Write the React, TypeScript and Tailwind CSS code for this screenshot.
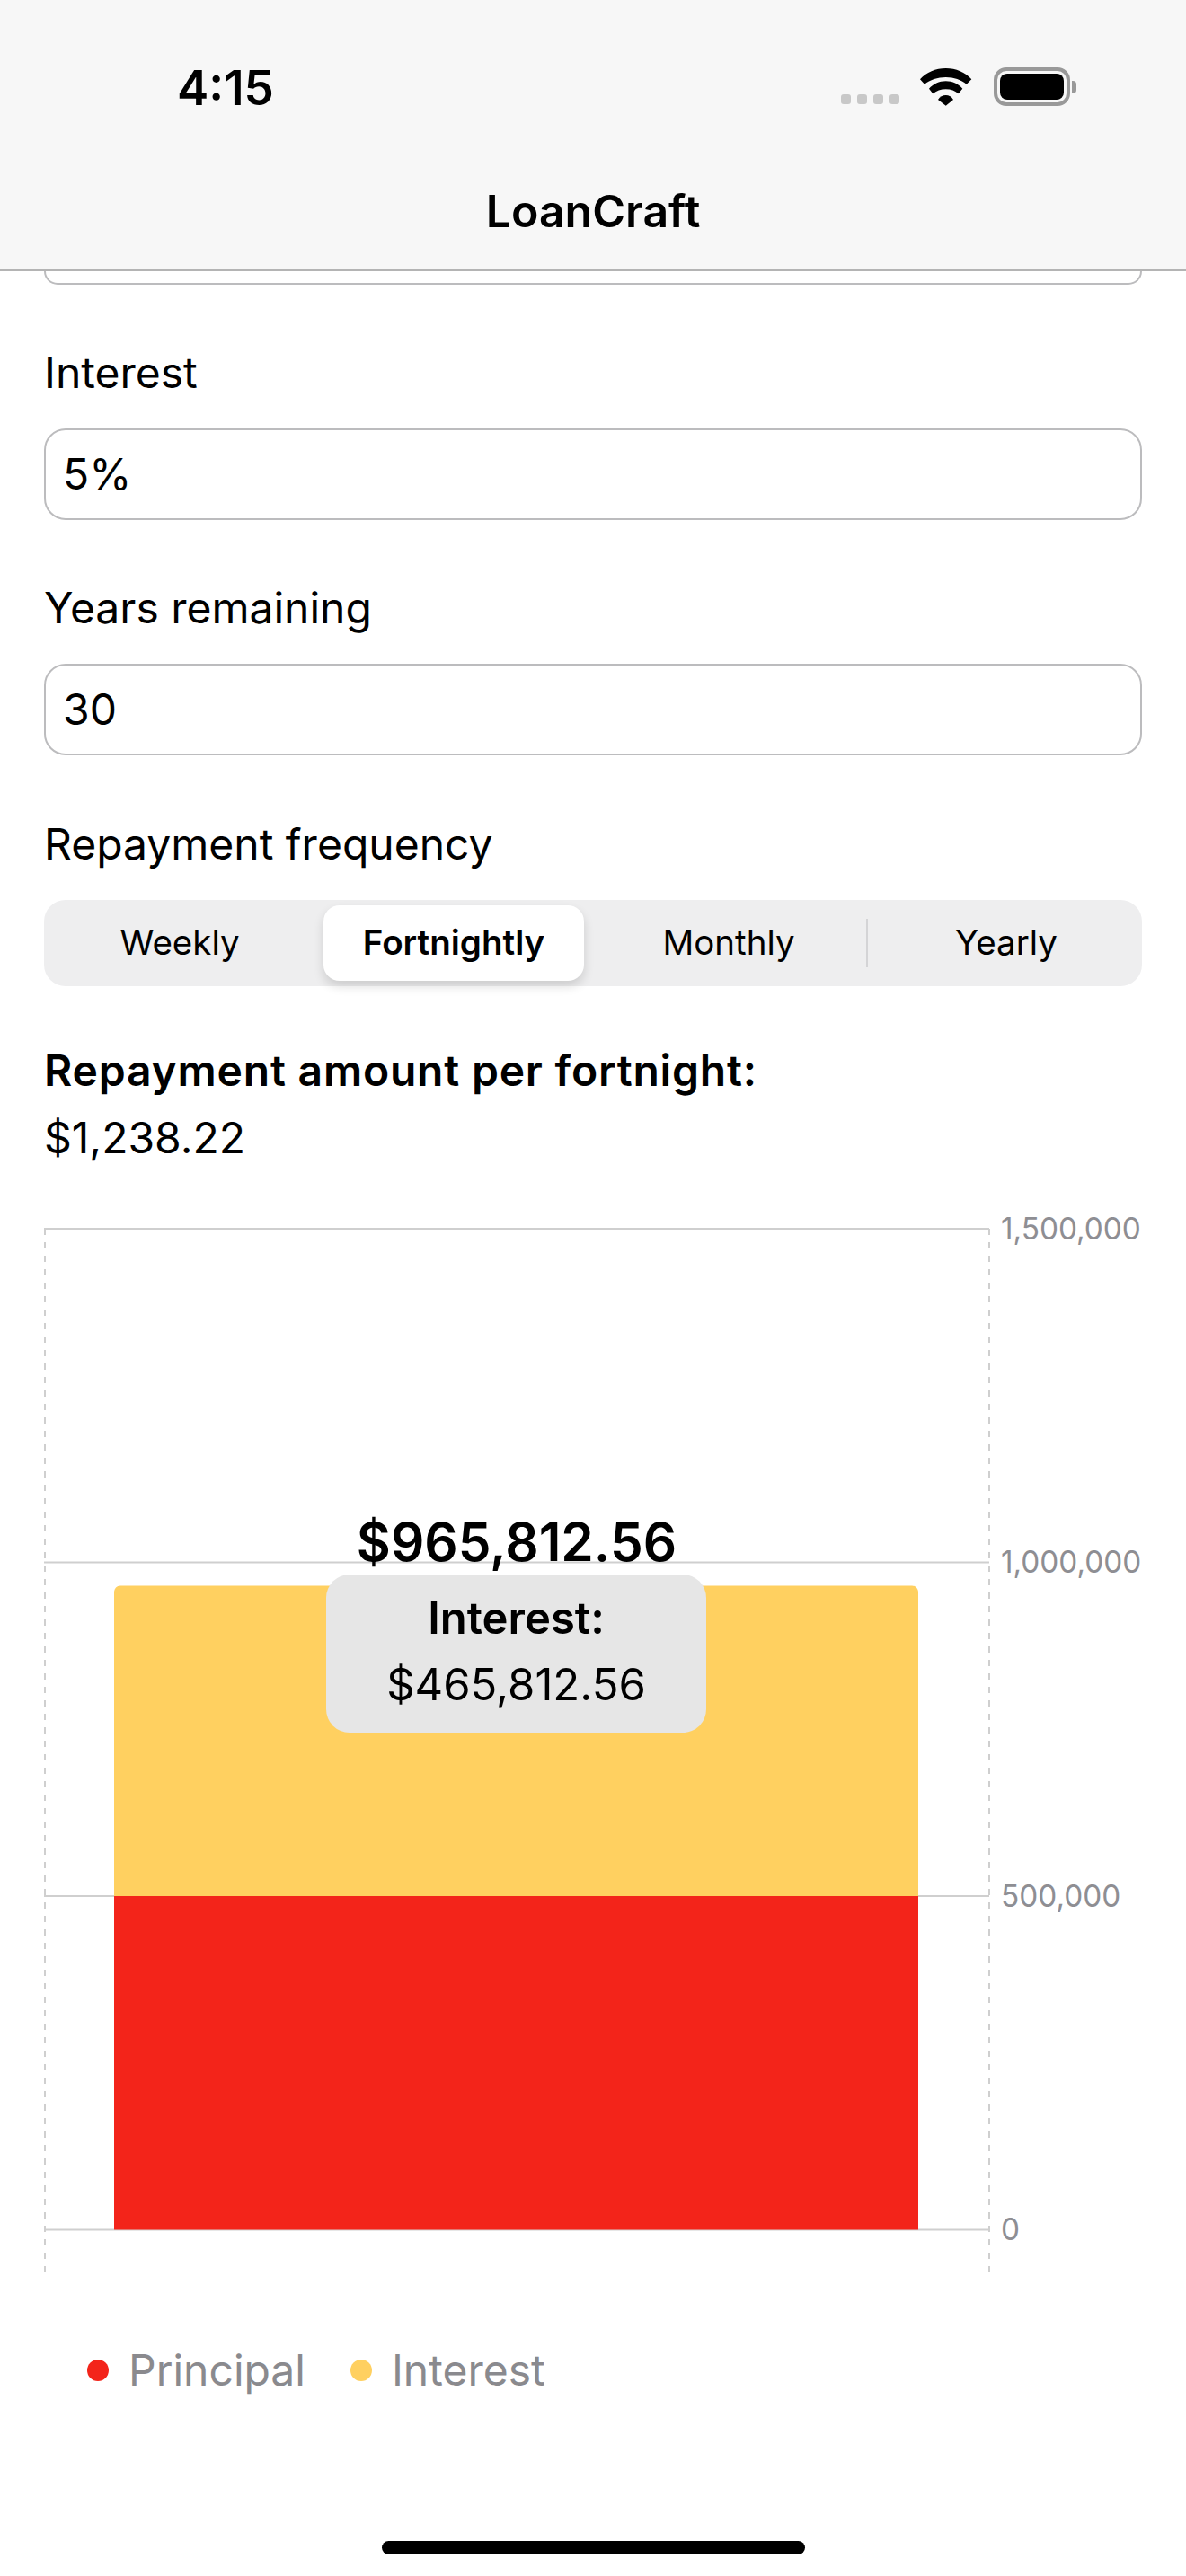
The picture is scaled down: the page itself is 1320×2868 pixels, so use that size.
const font = { fontFamily: 'Inter, "Liberation Sans", sans-serif' };

function Wifi() {
  return (
    <svg width="58" height="42" viewBox="0 0 58 42" fill="#000">
      <path d="M0 12.3C7 4.5 17.5 0 28.7 0S50.4 4.5 57.3 12.3L51.7 17.7C45.8 13 37.8 10 28.7 10S11 13 5 17.7Z" />
      <path d="M10 22.7C14.5 17.5 21.2 14.3 28.7 14.3S42.9 17.5 47.3 22.7L42.7 28.3C39.2 25.2 34.2 23.3 28.7 23.3S18 25.2 14.3 28.3Z" />
      <path d="M20 35C22 31.8 25.2 30 28.7 30S35 31.8 37 35L28.7 41.7Z" />
    </svg>
  );
}

function Field({ label, value }: { label: string; value: string }) {
  return (
    <div className="flex flex-col mt-[69px]">
      <div className="h-[58px] leading-[58px] text-[48px] text-black">{label}</div>
      <div className="mt-[33px] h-[102px] rounded-[24px] border-2 border-[#bcbcbe] flex items-center px-[19px] text-[48px] text-black">
        {value}
      </div>
    </div>
  );
}

function Chart() {
  const lines = [8, 379.5, 751, 1122.5];
  const labels = ['1,500,000', '1,000,000', '500,000', '0'];
  return (
    <svg width="1222" height="1180" viewBox="0 0 1222 1180" className="block mt-[64px] overflow-visible" style={font}>
      <line x1="1" y1="8" x2="1" y2="1177" stroke="#cfcfcf" strokeWidth="2" strokeDasharray="7 8" />
      <line x1="1052" y1="8" x2="1052" y2="1177" stroke="#cfcfcf" strokeWidth="2" strokeDasharray="7 8" />
      {lines.map((y) => (
        <line key={y} x1="0" y1={y} x2="1052" y2={y} stroke="#cfcfcf" strokeWidth="2" />
      ))}
      <path d="M78 413C78 408.6 81 405.5 85 405.5H966C970 405.5 973 408.6 973 413V751H78Z" fill="#ffd060" />
      <rect x="78" y="751" width="895" height="371.5" fill="#f3241a" />
      {lines.map((y, i) => (
        <text key={y} x="1065" y={y + 11.5} fontSize="33.3" fill="#8e8e93">{labels[i]}</text>
      ))}
    </svg>
  );
}

export default function App() {
  return (
    <div className="relative flex flex-col w-[1320px] h-[2868px] bg-white overflow-hidden" style={font}>
      <header className="h-[302px] shrink-0 bg-[#f7f7f7] border-b-2 border-[#b4b4b4] flex flex-col">
        <div className="flex items-start h-[208px] pt-[68px] pl-[197px]">
          <span className="text-[53px] leading-[60px] font-semibold text-black">4:15</span>
          <div className="ml-auto mr-[122px] mt-[7px] flex items-end">
            <div className="flex gap-[7px] mb-[2px]">
              <i className="w-[11px] h-[11px] rounded-[3px] bg-[#c8c8c8]" />
              <i className="w-[11px] h-[11px] rounded-[3px] bg-[#c8c8c8]" />
              <i className="w-[11px] h-[11px] rounded-[3px] bg-[#c8c8c8]" />
              <i className="w-[11px] h-[11px] rounded-[3px] bg-[#c8c8c8]" />
            </div>
            <div className="ml-[23px]"><Wifi /></div>
            <div className="ml-[24px] flex items-center">
              <div className="w-[85px] h-[43px] rounded-[14px] border-[4px] border-[#999999] p-[3px]">
                <div className="w-full h-full rounded-[8px] bg-black" />
              </div>
              <div className="ml-[2px] w-[5px] h-[14px] rounded-r-[4px] bg-[#999999]" />
            </div>
          </div>
        </div>
        <div className="text-center text-[50px] leading-[60px] font-semibold text-black -mt-[3px]">LoanCraft</div>
      </header>

      <main className="flex flex-col px-[49px]">
        <div className="h-[15px] rounded-b-[24px] border-x-2 border-b-2 border-[#bcbcbe]" />
        <Field label="Interest" value="5%" />
        <Field label="Years remaining" value="30" />
        <div className="mt-[70px] h-[58px] leading-[58px] text-[48px] text-black">Repayment frequency</div>
        <div className="mt-[33px] h-[96px] rounded-[24px] bg-[#eeeeef] flex items-center pl-[6px] text-[38.5px] text-black">
          <div className="w-[290px] text-center">Weekly</div>
          <div className="ml-[15px] w-[290px] h-[84px] rounded-[18px] bg-white shadow-[0_6px_12px_rgba(0,0,0,0.14)] flex items-center justify-center font-semibold">Fortnightly</div>
          <div className="flex-1 text-center pl-[8px]">Monthly</div>
          <div className="w-[2px] h-[54px] bg-[#d4d4d6]" />
          <div className="w-[305px] text-center pl-[3px]">Yearly</div>
        </div>
        <div className="mt-[65px] h-[58px] leading-[58px] text-[48px] font-semibold text-black tracking-[0.8px]">Repayment amount per fortnight:</div>
        <div className="mt-[17px] h-[58px] leading-[58px] text-[48px] text-black">$1,238.22</div>
        <Chart />
        <div className="mt-[70px] flex items-center h-[58px] pl-[48px] text-[48px] text-[#8a8a8e]">
          <i className="w-[24px] h-[24px] rounded-full bg-[#f3241a]" />
          <span className="ml-[22px]">Principal</span>
          <i className="ml-[50px] w-[24px] h-[24px] rounded-full bg-[#ffd060]" />
          <span className="ml-[22px]">Interest</span>
        </div>
      </main>

      <div className="mt-auto mb-[24px] self-center w-[471px] h-[15px] rounded-full bg-black" />

      <div className="absolute left-[325px] top-[1681px] w-[500px] text-center text-[58.5px] leading-[72px] font-semibold text-black">$965,812.56</div>
      <div className="absolute left-[363px] top-[1753px] w-[423px] h-[176px] rounded-[26px] bg-[#e6e6e6] flex flex-col items-center pt-[12px] text-[49px] leading-[74px] text-black">
        <span className="font-semibold">Interest:</span>
        <span>$465,812.56</span>
      </div>
    </div>
  );
}
